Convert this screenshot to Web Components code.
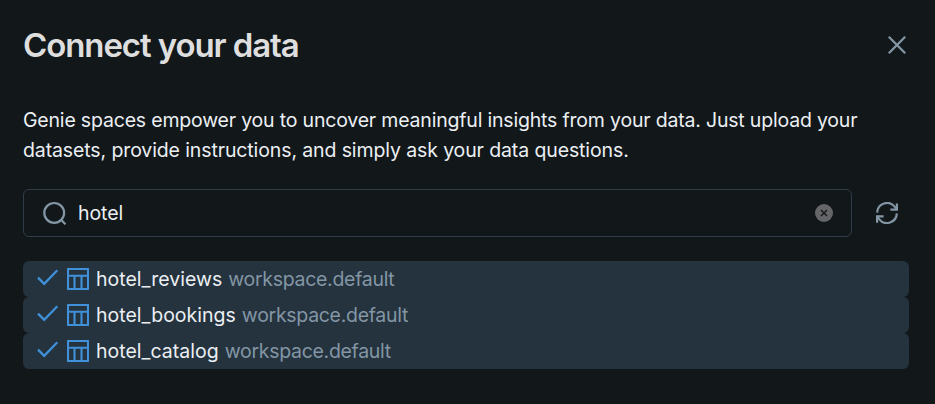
<!DOCTYPE html>
<html lang="en">
<head>
<meta charset="utf-8">
<title>Connect your data</title>
<style>
html, body { margin: 0; background: #12171a; }
body { font-family: Inter, "Liberation Sans", sans-serif; font-weight: 400; color: #ebeff3; width: 935px; height: 404px; overflow: hidden; }
</style>
</head>
<body>
<connect-dialog heading="Connect your data">
  <dialog-copy><text-line style="--ls:-0.19px">Genie spaces empower you to uncover meaningful insights from your data. Just upload your</text-line><text-line style="--ls:-0.115px">datasets, provide instructions, and simply ask your data questions.</text-line></dialog-copy>
  <search-bar>hotel</search-bar>
  <result-list>
    <result-row>hotel_reviews<span slot="path">workspace.default</span></result-row>
    <result-row>hotel_bookings<span slot="path">workspace.default</span></result-row>
    <result-row>hotel_catalog<span slot="path">workspace.default</span></result-row>
  </result-list>
</connect-dialog>
<script>
const icons = {
  close: '<svg width="20" height="20" viewBox="0 0 20 20"><path d="M1.8 1.8 18.2 18.2M18.2 1.8 1.8 18.2" fill="none" stroke="currentColor" stroke-width="2.3"/></svg>',
  search: '<svg width="24" height="24" viewBox="0 0 24 24" fill="none" stroke="currentColor" stroke-width="2.2"><circle cx="11.2" cy="11.9" r="9.9"/><path d="m18.1 18.8 4.3 4.5"/></svg>',
  clear: '<svg width="18" height="18" viewBox="0 0 18 18"><circle cx="9" cy="9" r="9" fill="#646668"/><path d="m6 6 6 6M12 6l-6 6" fill="none" stroke="#12171a" stroke-width="1.4"/></svg>',
  sync: '<svg width="22" height="22" viewBox="0 0 22 22" fill="none" stroke="currentColor" stroke-width="2.2"><path d="M1.2 10.6A9.8 9.8 0 0 1 18.8 4.9L20.4 6.6M20.8 11.4A9.8 9.8 0 0 1 3.2 17.1L1.6 15.4M20.9 1.6V7.6H14.4M1.1 20.7V14.4H7.6"/></svg>',
  check: '<svg width="22" height="17" viewBox="0 0 22 17"><path d="m1 8.6 6.2 6.2L20.3 1.3" fill="none" stroke="currentColor" stroke-width="2.3"/></svg>',
  table: '<svg width="22" height="22" viewBox="0 0 22 22" fill="none" stroke="currentColor" stroke-width="2.1" stroke-linejoin="round"><path d="M1 1H21V21H1ZM1 7.8H21M7.5 7.8V21M14.5 7.8V21"/></svg>'
};

function define(name, markup, fill) {
  customElements.define(name, class extends HTMLElement {
    constructor() {
      super();
      const template = document.createElement('template');
      template.innerHTML = markup;
      this.attachShadow({ mode: 'open' }).append(template.content.cloneNode(true));
    }
    connectedCallback() { if (fill) fill(this); }
  });
}

define('ui-icon', '<style>:host{display:flex;flex:none}svg{display:block}</style><span></span>',
  el => { el.shadowRoot.querySelector('span').innerHTML = icons[el.getAttribute('name')]; });

define('text-line', '<style>:host{display:block;white-space:nowrap;letter-spacing:var(--ls)}</style><slot></slot>');

define('dialog-copy', '<style>:host{display:block;margin-top:36px;font-size:19.5px;line-height:30px}</style><slot></slot>');

define('connect-dialog', `<style>
  :host{display:block;padding:21px 26px 0 23px}
  header{display:flex;align-items:center;justify-content:space-between;height:48px}
  h1{margin:0;font-size:33px;line-height:48px;font-weight:600;letter-spacing:-1.1px;color:#dedede;white-space:nowrap}
  ui-icon{color:#8396a5;margin-right:2px}
</style><header><h1></h1><ui-icon name="close"></ui-icon></header><slot></slot>`,
  el => { el.shadowRoot.querySelector('h1').textContent = el.getAttribute('heading'); });

define('search-bar', `<style>
  :host{display:flex;align-items:center;margin-top:24px;color:#8396a5}
  .field{box-sizing:border-box;display:flex;align-items:center;width:829px;height:48px;padding:0 18px 0 19px;border:1px solid #303d47;border-radius:6px}
  .value{flex:1;margin-left:11px;font-size:19.5px;line-height:30px;color:#ebeff3;letter-spacing:-0.05px}
  .sync{margin-left:24px}
</style><div class="field"><ui-icon name="search"></ui-icon><div class="value"><slot></slot></div><ui-icon name="clear"></ui-icon></div><ui-icon class="sync" name="sync"></ui-icon>`);

define('result-list', '<style>:host{display:block;margin-top:24px}</style><slot></slot>');

define('result-row', `<style>
  :host{box-sizing:border-box;display:flex;align-items:center;height:36px;padding-left:14px;border-radius:6px;background:#25333e;font-size:19.5px;line-height:30px;white-space:nowrap}
  ui-icon{color:#4090da}
  .check{margin-top:-4px}
  .table{margin:0 7px 0 8px}
  .name{letter-spacing:0.02px}
  .path{margin-left:6px;color:#8396a5;font-weight:400;letter-spacing:-0.3px}
</style><ui-icon class="check" name="check"></ui-icon><ui-icon class="table" name="table"></ui-icon><div class="name"><slot></slot></div><div class="path"><slot name="path"></slot></div>`);
</script>
</body>
</html>
